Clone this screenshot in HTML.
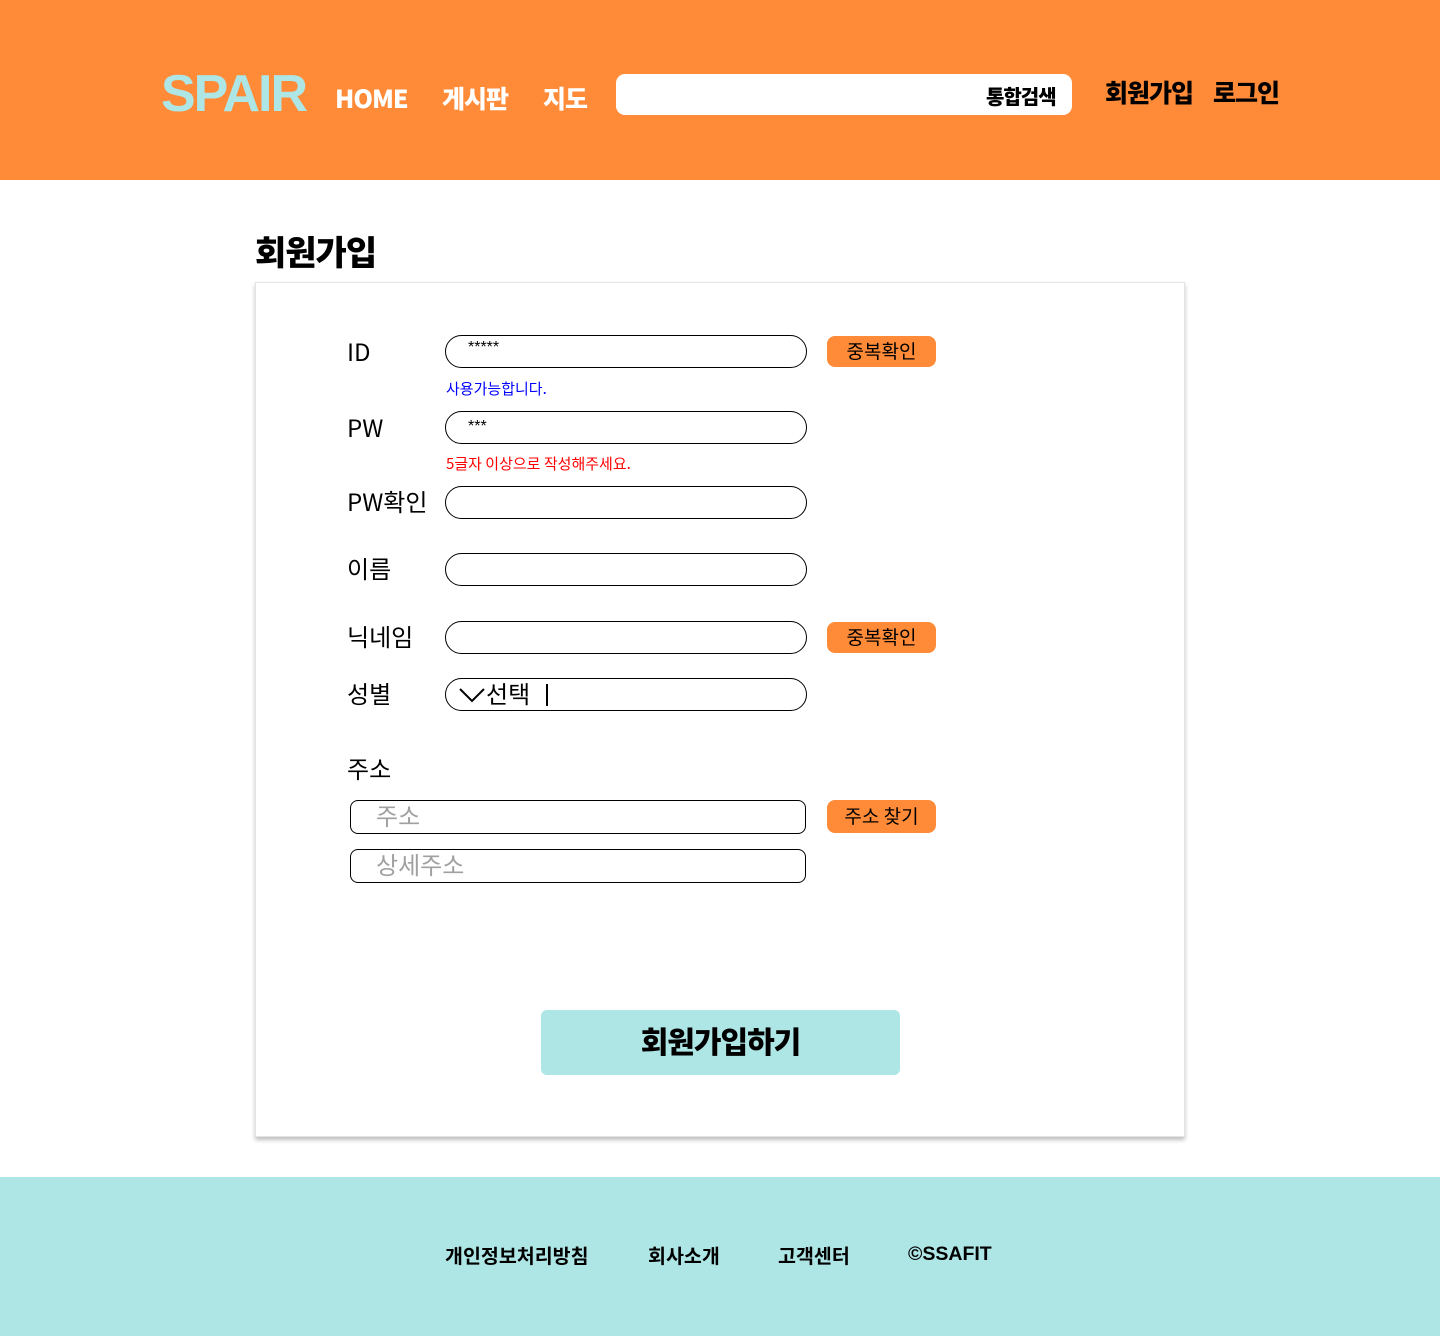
<!DOCTYPE html>
<html><head><meta charset="utf-8">
<style>
*{margin:0;padding:0;box-sizing:border-box}
body{width:1440px;height:1336px;position:relative;background:#fff;font-family:"Liberation Sans","Noto Sans CJK KR",sans-serif;color:#000;overflow:hidden}
.a{position:absolute;white-space:nowrap}
header{position:absolute;left:0;top:0;width:1440px;height:180px;background:#ff8a37}
.logo{left:161px;top:64px;font-size:52px;font-weight:900;color:#aee5e5;letter-spacing:-2px;font-family:"Liberation Sans","Noto Sans CJK KR",sans-serif}
.nav{top:80px;font-size:25px;font-weight:900;color:#fff;font-family:"Noto Sans CJK KR",sans-serif;letter-spacing:-1px}
.search{left:616px;top:74px;width:456px;height:41px;background:#fff;border-radius:9px}
.sbtn{left:986px;top:81px;font-size:20px;font-weight:900;font-family:"Noto Sans CJK KR",sans-serif;letter-spacing:-1px}
.rnav{top:74px;font-size:25px;font-weight:900;font-family:"Noto Sans CJK KR",sans-serif;letter-spacing:-1px}
.title{left:255px;top:226px;font-size:34px;font-weight:900;font-family:"Noto Sans CJK KR",sans-serif;letter-spacing:-1px}
.card{left:255px;top:282px;width:930px;height:855px;border:1px solid #e4e4e4;box-shadow:0 3px 4px rgba(0,0,0,.25);background:#fff}
.lbl{left:347px;font-size:24px;font-family:"Noto Sans CJK KR",sans-serif}
.inp{left:445px;width:362px;height:33px;border:1px solid #000;border-radius:17px;background:#fff}
.inp2{left:350px;width:456px;height:34px;border:1px solid #000;border-radius:8px;background:#fff}
.btn{left:827px;width:109px;height:31px;background:#ff8a37;border-radius:8px;font-size:19px;text-align:center;line-height:30px;font-family:"Noto Sans CJK KR",sans-serif}
.msg{left:446px;font-size:15px;font-family:"Noto Sans CJK KR",sans-serif}
.ph{font-size:24px;color:#a0a0a0;font-family:"Noto Sans CJK KR",sans-serif;position:absolute;left:25px;top:-4px}
.submit{left:541px;top:1010px;width:359px;height:65px;background:#aee5e5;border-radius:6px;text-align:center;line-height:60px;font-size:30px;font-weight:900;font-family:"Noto Sans CJK KR",sans-serif;letter-spacing:-1px}
footer{position:absolute;left:0;top:1177px;width:1440px;height:159px;background:#aee5e5}
.ft{top:1240px;font-size:19.5px;font-weight:700;font-family:"Noto Sans CJK KR",sans-serif}
</style></head><body>
<header></header>
<div class="a logo">SPAIR</div>
<div class="a nav" style="left:335px">HOME</div>
<div class="a nav" style="left:442px">게시판</div>
<div class="a nav" style="left:543px">지도</div>
<div class="a search"></div>
<div class="a sbtn">통합검색</div>
<div class="a rnav" style="left:1105px">회원가입</div>
<div class="a rnav" style="left:1213px">로그인</div>

<div class="a title">회원가입</div>
<div class="a card"></div>

<div class="a lbl" style="top:333px">ID</div>
<div class="a inp" style="top:335px"><span style="position:absolute;left:22px;top:3px;font-size:16px">*****</span></div>
<div class="a btn" style="top:336px">중복확인</div>
<div class="a msg" style="top:378px;color:#0000ff">사용가능합니다.</div>

<div class="a lbl" style="top:409px">PW</div>
<div class="a inp" style="top:411px"><span style="position:absolute;left:22px;top:6px;font-size:16px">***</span></div>
<div class="a msg" style="top:453px;color:#ff0000">5글자 이상으로 작성해주세요.</div>

<div class="a lbl" style="top:483px">PW확인</div>
<div class="a inp" style="top:486px"></div>

<div class="a lbl" style="top:550px">이름</div>
<div class="a inp" style="top:553px"></div>

<div class="a lbl" style="top:618px">닉네임</div>
<div class="a inp" style="top:621px"></div>
<div class="a btn" style="top:622px">중복확인</div>

<div class="a lbl" style="top:675px">성별</div>
<div class="a inp" style="top:678px">
<svg style="position:absolute;left:12px;top:7px" width="28" height="18" viewBox="0 0 28 18"><path d="M2 3 L14 15 L26 3" fill="none" stroke="#000" stroke-width="2"/></svg>
<span style="position:absolute;left:40px;top:-4px;font-size:24px;font-family:'Noto Sans CJK KR',sans-serif">선택</span>
<span style="position:absolute;left:100px;top:5px;width:2px;height:22px;background:#000"></span>
</div>

<div class="a lbl" style="top:750px">주소</div>
<div class="a inp2" style="top:800px"><span class="ph">주소</span></div>
<div class="a btn" style="top:800px;height:33px;line-height:32px">주소 찾기</div>
<div class="a inp2" style="top:849px"><span class="ph">상세주소</span></div>

<div class="a submit">회원가입하기</div>

<footer></footer>
<div class="a ft" style="left:445px">개인정보처리방침</div>
<div class="a ft" style="left:648px">회사소개</div>
<div class="a ft" style="left:778px">고객센터</div>
<div class="a ft" style="left:908px;font-family:'Liberation Sans',sans-serif;top:1243px">©SSAFIT</div>
</body></html>
